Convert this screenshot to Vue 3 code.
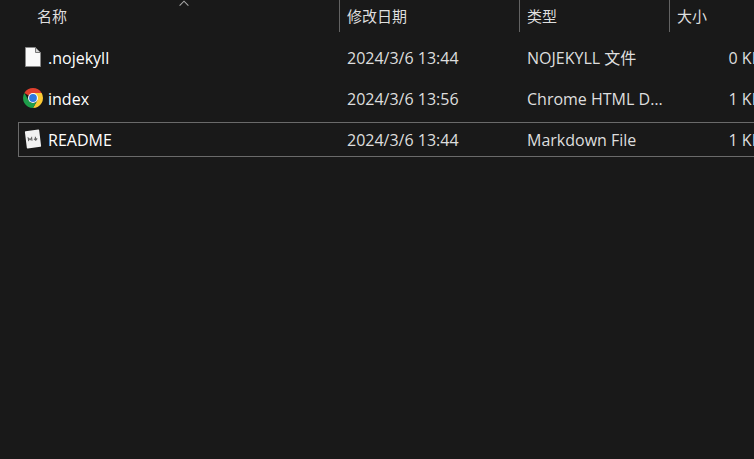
<script setup>
import { ref } from 'vue'

const focused = ref('README')

const files = [
  { name: '.nojekyll', icon: 'blank', date: '2024/3/6 13:44', type: 'NOJEKYLL 文件', size: '0 KB' },
  { name: 'index', icon: 'chrome', date: '2024/3/6 13:56', type: 'Chrome HTML Document', size: '1 KB' },
  { name: 'README', icon: 'markdown', date: '2024/3/6 13:44', type: 'Markdown File', size: '1 KB' },
]
</script>

<template>
  <main class="explorer">
    <table class="files">
      <thead>
        <tr class="line head">
          <th scope="col" aria-sort="ascending">
            名称
            <svg class="sort" viewBox="0 0 10 6" aria-hidden="true">
              <path d="M0.6 5.6 L5 1.2 L9.4 5.6" fill="none" stroke="#a8a8a8" stroke-width="1.1" />
            </svg>
          </th>
          <th scope="col">修改日期</th>
          <th scope="col">类型</th>
          <th scope="col">大小</th>
        </tr>
      </thead>
      <tbody>
        <tr
          v-for="file in files"
          :key="file.name"
          class="line row"
          :class="{ focused: file.name === focused }"
          @click="focused = file.name"
        >
          <td class="name">
            <svg v-if="file.icon === 'blank'" class="icon" viewBox="0 0 20 22" aria-hidden="true">
              <path d="M2.5 1.5 H12.5 L17.5 6.5 V20.5 H2.5 Z" fill="#fafafa" stroke="#8a8a8a" />
              <path d="M12.5 1.5 V6.5 H17.5 Z" fill="#d4d4d4" stroke="#777" stroke-linejoin="round" />
            </svg>
            <svg v-else-if="file.icon === 'chrome'" class="icon" viewBox="0 0 20 22" aria-hidden="true">
              <path d="M10 11 L1.34 6 A10 10 0 0 1 18.66 6 Z" fill="#e0402f" />
              <path d="M10 6 H18.66 A10 10 0 0 1 10 21 L14.33 13.5 Z" fill="#fcc934" />
              <path d="M1.34 6 L5.67 13.5 A5 5 0 0 0 14.33 13.5 L10 21 A10 10 0 0 1 1.34 6 Z" fill="#1e9e4a" />
              <circle cx="10" cy="11" r="5" fill="#fff" />
              <circle cx="10" cy="11" r="3.9" fill="#2f78e0" />
            </svg>
            <svg v-else class="icon" viewBox="0 0 20 22" aria-hidden="true">
              <g transform="rotate(-7 10 11)">
                <rect x="2.8" y="2.3" width="14.4" height="17.4" rx="0.8" fill="#f2f2f2" />
                <path d="M5.4 12.6 V9.6 L7.1 11.4 L8.8 9.6 V12.6" fill="none" stroke="#666" stroke-width="1.1" />
                <path d="M12.6 9 V12.2 M11 10.9 L12.6 12.5 L14.2 10.9" fill="none" stroke="#666" stroke-width="1.1" />
              </g>
            </svg>
            <span>{{ file.name }}</span>
          </td>
          <td>{{ file.date }}</td>
          <td class="type">{{ file.type }}</td>
          <td class="size">{{ file.size }}</td>
        </tr>
      </tbody>
    </table>
  </main>
</template>

<style>
body {
  background: #191919;
}
</style>

<style scoped>
.explorer {
  min-height: 100vh;
  box-sizing: border-box;
  padding-left: 18px;
  overflow: hidden;
  background: #191919;
  color: #dedede;
  font-family: "Open Sans", "Noto Sans CJK SC", sans-serif;
  font-size: 16px;
  line-height: 20px;
}

.files,
.files thead {
  display: block;
}

.files {
  width: max-content;
  min-width: 100%;
}

.files tbody {
  display: flex;
  flex-direction: column;
  gap: 6px;
  padding-top: 8px;
}

.line {
  display: grid;
  grid-template-columns: minmax(321px, 1fr) 180px 150px 100px;
}

.head {
  padding-right: 2px;
}

.head th {
  position: relative;
  height: 32px;
  box-sizing: border-box;
  padding: 6px 7px;
  border-left: 1px solid #636363;
  font-size: 15px;
  font-weight: 400;
  text-align: left;
}

.head th:first-child {
  padding-left: 18px;
  border-left-color: transparent;
}

.sort {
  position: absolute;
  top: 0;
  left: 50%;
  width: 10px;
  height: 6px;
}

.row {
  height: 35px;
  box-sizing: border-box;
  align-items: center;
  border: 1px solid transparent;
}

.row.focused {
  border-color: #6a6a6a;
}

.row td {
  padding: 0 7px;
  white-space: nowrap;
}

.row .name {
  display: flex;
  align-items: center;
  gap: 5px;
  padding-left: 4px;
  color: #fff;
}

.icon {
  flex: none;
  width: 20px;
  height: 22px;
  margin-bottom: 2px;
}

.row .type {
  overflow: hidden;
  text-overflow: ellipsis;
}

.row .size {
  padding-right: 8px;
  text-align: right;
}
</style>
